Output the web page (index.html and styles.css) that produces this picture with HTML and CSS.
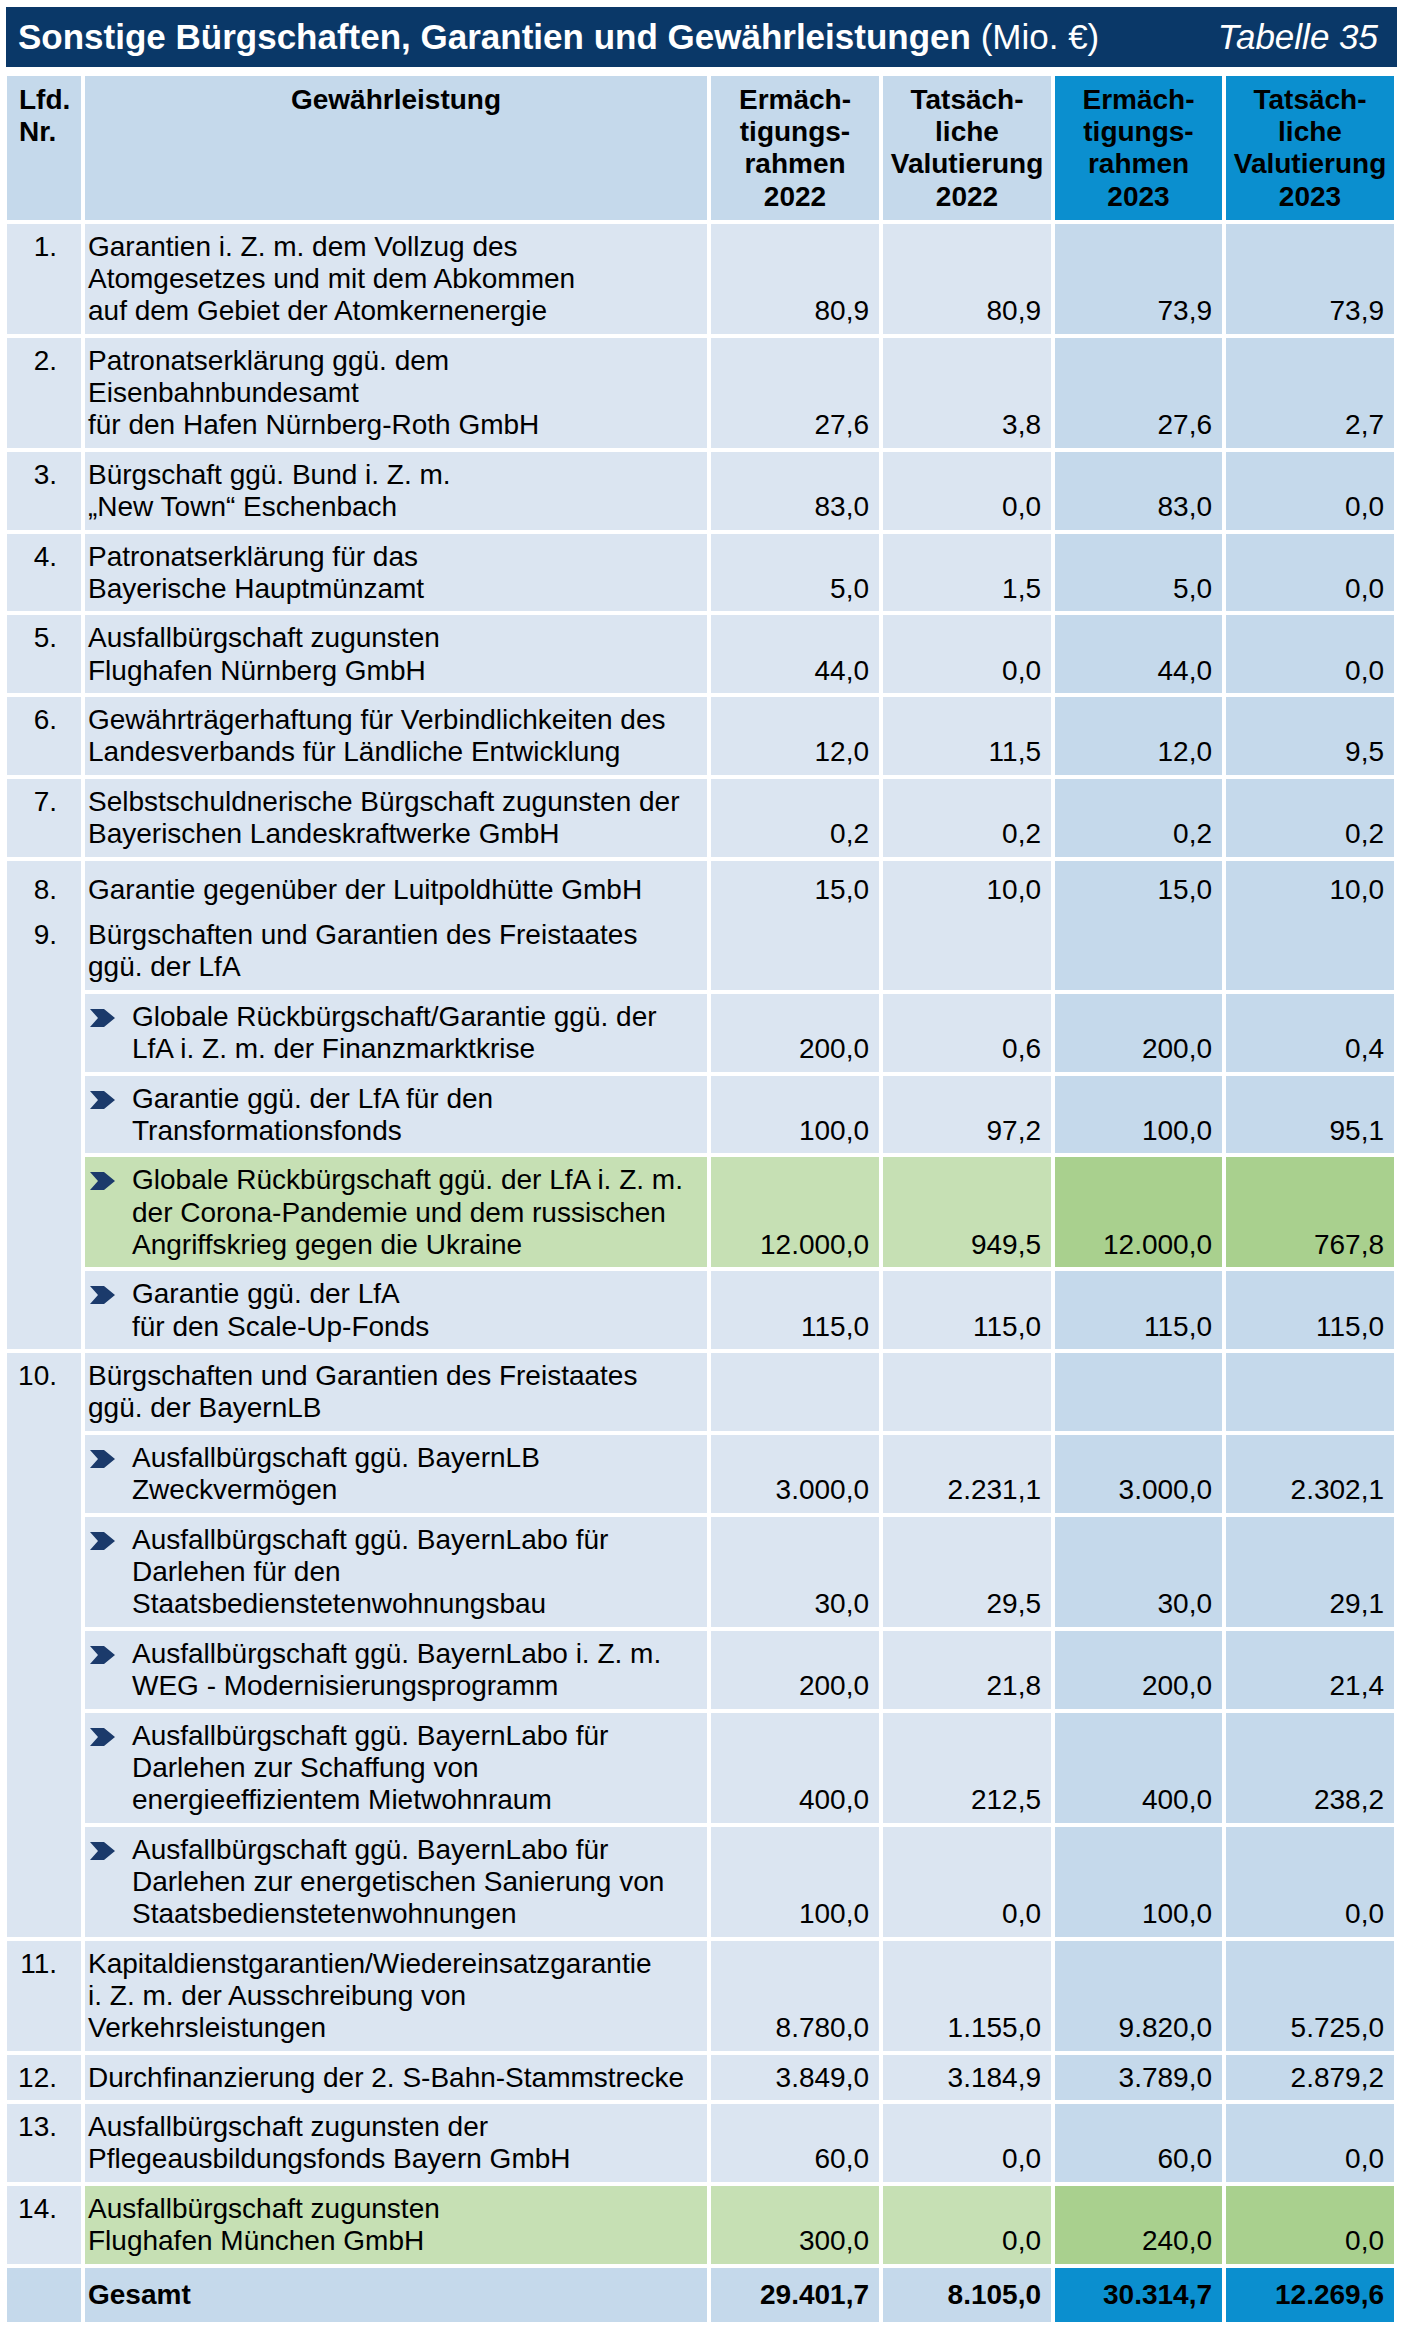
FILE: index.html
```html
<!DOCTYPE html>
<html lang="de">
<head>
<meta charset="utf-8">
<title>Tabelle 35</title>
<link rel="stylesheet" href="styles.css">
</head>
<body>
<div class="page">
  <div class="titlebar">
    <div class="title"><b>Sonstige Bürgschaften, Garantien und Gewährleistungen</b> <span class="unit">(Mio. €)</span></div>
    <div class="tabnr">Tabelle 35</div>
  </div>

  <table class="tbl">
    <colgroup>
      <col class="w-nr"><col class="w-desc"><col class="w-num"><col class="w-num"><col class="w-num3"><col class="w-num">
    </colgroup>
    <thead>
      <tr>
        <th class="nr">Lfd.<br>Nr.</th>
        <th>Gewährleistung</th>
        <th>Ermäch-<br>tigungs-<br>rahmen<br>2022</th>
        <th>Tatsäch-<br>liche<br>Valutierung<br>2022</th>
        <th class="y23">Ermäch-<br>tigungs-<br>rahmen<br>2023</th>
        <th class="y23">Tatsäch-<br>liche<br>Valutierung<br>2023</th>
      </tr>
    </thead>
    <tbody>
      <tr>
        <td class="nr">1.</td>
        <td class="desc">Garantien i. Z. m. dem Vollzug des<br>Atomgesetzes und mit dem Abkommen<br>auf dem Gebiet der Atomkernenergie</td>
        <td class="num">80,9</td><td class="num">80,9</td><td class="num y23">73,9</td><td class="num y23">73,9</td>
      </tr>
      <tr>
        <td class="nr">2.</td>
        <td class="desc">Patronatserklärung ggü. dem<br>Eisenbahnbundesamt<br>für den Hafen Nürnberg-Roth GmbH</td>
        <td class="num">27,6</td><td class="num">3,8</td><td class="num y23">27,6</td><td class="num y23">2,7</td>
      </tr>
      <tr>
        <td class="nr">3.</td>
        <td class="desc">Bürgschaft ggü. Bund i. Z. m.<br>„New Town“ Eschenbach</td>
        <td class="num">83,0</td><td class="num">0,0</td><td class="num y23">83,0</td><td class="num y23">0,0</td>
      </tr>
      <tr>
        <td class="nr">4.</td>
        <td class="desc">Patronatserklärung für das<br>Bayerische Hauptmünzamt</td>
        <td class="num">5,0</td><td class="num">1,5</td><td class="num y23">5,0</td><td class="num y23">0,0</td>
      </tr>
      <tr>
        <td class="nr">5.</td>
        <td class="desc">Ausfallbürgschaft zugunsten<br>Flughafen Nürnberg GmbH</td>
        <td class="num">44,0</td><td class="num">0,0</td><td class="num y23">44,0</td><td class="num y23">0,0</td>
      </tr>
      <tr>
        <td class="nr">6.</td>
        <td class="desc">Gewährträgerhaftung für Verbindlichkeiten des<br>Landesverbands für Ländliche Entwicklung</td>
        <td class="num">12,0</td><td class="num">11,5</td><td class="num y23">12,0</td><td class="num y23">9,5</td>
      </tr>
      <tr>
        <td class="nr">7.</td>
        <td class="desc">Selbstschuldnerische Bürgschaft zugunsten der<br>Bayerischen Landeskraftwerke GmbH</td>
        <td class="num">0,2</td><td class="num">0,2</td><td class="num y23">0,2</td><td class="num y23">0,2</td>
      </tr>
      <tr class="joined">
        <td class="nr">8.</td>
        <td class="desc">Garantie gegenüber der Luitpoldhütte GmbH</td>
        <td class="num">15,0</td><td class="num">10,0</td><td class="num y23">15,0</td><td class="num y23">10,0</td>
      </tr>
      <tr>
        <td class="nr" rowspan="5">9.</td>
        <td class="desc">Bürgschaften und Garantien des Freistaates<br>ggü. der LfA</td>
        <td class="num"></td><td class="num"></td><td class="num y23"></td><td class="num y23"></td>
      </tr>
      <tr>
        <td class="desc"><div class="item"><svg class="chev" viewBox="0 0 25 18"><polygon points="0,0 14,0 25,9 14,18 0,18 8,9"/></svg><span>Globale Rückbürgschaft/Garantie ggü. der<br>LfA i. Z. m. der Finanzmarktkrise</span></div></td>
        <td class="num">200,0</td><td class="num">0,6</td><td class="num y23">200,0</td><td class="num y23">0,4</td>
      </tr>
      <tr>
        <td class="desc"><div class="item"><svg class="chev" viewBox="0 0 25 18"><polygon points="0,0 14,0 25,9 14,18 0,18 8,9"/></svg><span>Garantie ggü. der LfA für den<br>Transformationsfonds</span></div></td>
        <td class="num">100,0</td><td class="num">97,2</td><td class="num y23">100,0</td><td class="num y23">95,1</td>
      </tr>
      <tr class="green">
        <td class="desc"><div class="item"><svg class="chev" viewBox="0 0 25 18"><polygon points="0,0 14,0 25,9 14,18 0,18 8,9"/></svg><span>Globale Rückbürgschaft ggü. der LfA i. Z. m.<br>der Corona-Pandemie und dem russischen<br>Angriffskrieg gegen die Ukraine</span></div></td>
        <td class="num">12.000,0</td><td class="num">949,5</td><td class="num y23">12.000,0</td><td class="num y23">767,8</td>
      </tr>
      <tr>
        <td class="desc"><div class="item"><svg class="chev" viewBox="0 0 25 18"><polygon points="0,0 14,0 25,9 14,18 0,18 8,9"/></svg><span>Garantie ggü. der LfA<br>für den Scale-Up-Fonds</span></div></td>
        <td class="num">115,0</td><td class="num">115,0</td><td class="num y23">115,0</td><td class="num y23">115,0</td>
      </tr>
      <tr>
        <td class="nr" rowspan="6">10.</td>
        <td class="desc">Bürgschaften und Garantien des Freistaates<br>ggü. der BayernLB</td>
        <td class="num"></td><td class="num"></td><td class="num y23"></td><td class="num y23"></td>
      </tr>
      <tr>
        <td class="desc"><div class="item"><svg class="chev" viewBox="0 0 25 18"><polygon points="0,0 14,0 25,9 14,18 0,18 8,9"/></svg><span>Ausfallbürgschaft ggü. BayernLB<br>Zweckvermögen</span></div></td>
        <td class="num">3.000,0</td><td class="num">2.231,1</td><td class="num y23">3.000,0</td><td class="num y23">2.302,1</td>
      </tr>
      <tr>
        <td class="desc"><div class="item"><svg class="chev" viewBox="0 0 25 18"><polygon points="0,0 14,0 25,9 14,18 0,18 8,9"/></svg><span>Ausfallbürgschaft ggü. BayernLabo für<br>Darlehen für den<br>Staatsbedienstetenwohnungsbau</span></div></td>
        <td class="num">30,0</td><td class="num">29,5</td><td class="num y23">30,0</td><td class="num y23">29,1</td>
      </tr>
      <tr>
        <td class="desc"><div class="item"><svg class="chev" viewBox="0 0 25 18"><polygon points="0,0 14,0 25,9 14,18 0,18 8,9"/></svg><span>Ausfallbürgschaft ggü. BayernLabo i. Z. m.<br>WEG - Modernisierungsprogramm</span></div></td>
        <td class="num">200,0</td><td class="num">21,8</td><td class="num y23">200,0</td><td class="num y23">21,4</td>
      </tr>
      <tr>
        <td class="desc"><div class="item"><svg class="chev" viewBox="0 0 25 18"><polygon points="0,0 14,0 25,9 14,18 0,18 8,9"/></svg><span>Ausfallbürgschaft ggü. BayernLabo für<br>Darlehen zur Schaffung von<br>energieeffizientem Mietwohnraum</span></div></td>
        <td class="num">400,0</td><td class="num">212,5</td><td class="num y23">400,0</td><td class="num y23">238,2</td>
      </tr>
      <tr>
        <td class="desc"><div class="item"><svg class="chev" viewBox="0 0 25 18"><polygon points="0,0 14,0 25,9 14,18 0,18 8,9"/></svg><span>Ausfallbürgschaft ggü. BayernLabo für<br>Darlehen zur energetischen Sanierung von<br>Staatsbedienstetenwohnungen</span></div></td>
        <td class="num">100,0</td><td class="num">0,0</td><td class="num y23">100,0</td><td class="num y23">0,0</td>
      </tr>
      <tr>
        <td class="nr">11.</td>
        <td class="desc">Kapitaldienstgarantien/Wiedereinsatzgarantie<br>i. Z. m. der Ausschreibung von<br>Verkehrsleistungen</td>
        <td class="num">8.780,0</td><td class="num">1.155,0</td><td class="num y23">9.820,0</td><td class="num y23">5.725,0</td>
      </tr>
      <tr>
        <td class="nr">12.</td>
        <td class="desc">Durchfinanzierung der 2. S-Bahn-Stammstrecke</td>
        <td class="num">3.849,0</td><td class="num">3.184,9</td><td class="num y23">3.789,0</td><td class="num y23">2.879,2</td>
      </tr>
      <tr>
        <td class="nr">13.</td>
        <td class="desc">Ausfallbürgschaft zugunsten der<br>Pflegeausbildungsfonds Bayern GmbH</td>
        <td class="num">60,0</td><td class="num">0,0</td><td class="num y23">60,0</td><td class="num y23">0,0</td>
      </tr>
      <tr class="green">
        <td class="nr">14.</td>
        <td class="desc">Ausfallbürgschaft zugunsten<br>Flughafen München GmbH</td>
        <td class="num">300,0</td><td class="num">0,0</td><td class="num y23">240,0</td><td class="num y23">0,0</td>
      </tr>
      <tr class="total">
        <td class="nr"></td>
        <td class="desc">Gesamt</td>
        <td class="num">29.401,7</td><td class="num">8.105,0</td><td class="num y23">30.314,7</td><td class="num y23">12.269,6</td>
      </tr>
    </tbody>
  </table>
</div>
</body>
</html>
```

FILE: styles.css
```css
html, body {
  margin: 0;
  padding: 0;
  background: #ffffff;
}

body {
  font-family: "Liberation Sans", Arial, sans-serif;
  color: #000;
}

.page {
  padding-top: 7px;
}

.titlebar {
  margin-left: 6px;
  width: 1391px;
  height: 60px;
  box-sizing: border-box;
  padding: 0 19px 0 12px;
  background: #0a3868;
  color: #ffffff;
  display: flex;
  align-items: center;
  justify-content: space-between;
  font-size: 35px;
  white-space: nowrap;
}

.title b {
  font-weight: bold;
}

.unit {
  font-weight: normal;
}

.tabnr {
  font-style: italic;
}

.tbl {
  margin: 5px 0 0 3px;
  width: 1395px;
  table-layout: fixed;
  border-collapse: separate;
  border-spacing: 4px;
  font-size: 28px;
  line-height: 32.2px;
}

.w-nr { width: 74px; }
.w-desc { width: 622px; }
.w-num { width: 168px; }
.w-num3 { width: 167px; }

.tbl th {
  background: #c5d9eb;
  font-weight: bold;
  text-align: center;
  vertical-align: top;
  padding: 8px 2px 7px;
}

.tbl th.nr {
  text-align: left;
  padding-left: 12px;
}

.tbl th.y23 {
  background: #0b8fcf;
}

.tbl td {
  background: #dbe5f1;
  vertical-align: top;
  padding: 7px 10px 6.4px 3px;
  white-space: nowrap;
}

.tbl td.nr {
  text-align: right;
  padding-right: 24px;
  padding-left: 2px;
}

.tbl td.num {
  text-align: right;
  vertical-align: bottom;
  padding-right: 10px;
}

.tbl td.y23 {
  background: #c5d9eb;
}

.tbl tr.green td.desc,
.tbl tr.green td.num {
  background: #c6e0b4;
}

.tbl tr.green td.num.y23 {
  background: #a9d08e;
}

.tbl tr.joined td {
  padding-top: 13px;
  padding-bottom: 2px;
  box-shadow: 0 5px 0 #dbe5f1;
}

.tbl tr.joined td.y23 {
  box-shadow: 0 5px 0 #c5d9eb;
}

.item {
  display: flex;
  align-items: flex-start;
}

.chev {
  flex-shrink: 0;
  width: 25px;
  height: 18px;
  margin: 8px 17px 0 2px;
  fill: #1b3a6b;
}

.tbl tr.total {
  height: 54px;
}

.tbl tr.total td {
  background: #c5d9eb;
  font-weight: bold;
  vertical-align: middle;
  padding-top: 0;
  padding-bottom: 0;
}

.tbl tr.total td.y23 {
  background: #0b8fcf;
}
```
